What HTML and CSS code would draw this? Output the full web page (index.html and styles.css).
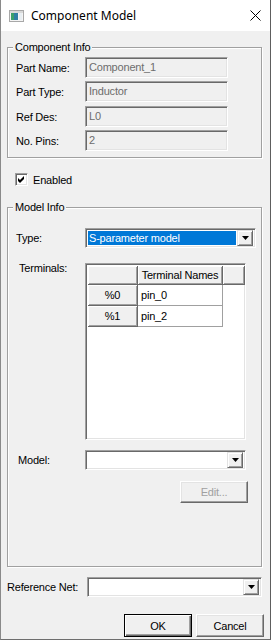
FILE: index.html
```html
<!DOCTYPE html>
<html>
<head>
<meta charset="utf-8">
<link rel="stylesheet" href="styles.css">
</head>
<body>
<div class="window">
  <div class="titlebar">
    <svg class="app-icon" width="15" height="12" viewBox="0 0 15 12">
      <rect x="0.5" y="0.5" width="14" height="11" fill="#f4f4f4" stroke="#a8a8a8"/>
      <rect x="1" y="1" width="13" height="2" fill="#d8d8d8"/>
      <rect x="2" y="3" width="7" height="7" fill="#2e7fa3"/>
      <rect x="2" y="3" width="3" height="7" fill="#3aa06a"/>
      <rect x="10" y="3" width="3" height="7" fill="#e8eef2"/>
    </svg>
    <span class="title">Component Model</span>
    <svg class="close" width="11" height="11" viewBox="0 0 11 11">
      <path d="M0.5 0.5 L10.5 10.5 M10.5 0.5 L0.5 10.5" stroke="#000" stroke-width="1"/>
    </svg>
  </div>
  <div class="body">
    <div class="group group-info">
      <span class="legend">Component Info</span>
      <div class="field-row r1"><span class="label">Part Name:</span><div class="textbox">Component_1</div></div>
      <div class="field-row r2"><span class="label">Part Type:</span><div class="textbox">Inductor</div></div>
      <div class="field-row r3"><span class="label">Ref Des:</span><div class="textbox">L0</div></div>
      <div class="field-row r4"><span class="label">No. Pins:</span><div class="textbox">2</div></div>
    </div>

    <div class="check-row">
      <span class="checkbox">
        <svg width="9" height="9" viewBox="0 0 9 9"><polygon points="1,3 3,5 7,1 7,4 3,8 1,6" fill="#000"/></svg>
      </span>
      <span class="check-label">Enabled</span>
    </div>

    <div class="group group-model">
      <span class="legend">Model Info</span>
      <div class="type-row">
        <span class="label type-label">Type:</span>
        <div class="combo combo-type">
          <div class="combo-field"><span class="selected">S-parameter model</span></div>
          <div class="drop-btn"><svg width="7" height="4" viewBox="0 0 7 4"><polygon points="0,0 7,0 3.5,4" fill="#000"/></svg></div>
        </div>
      </div>
      <div class="terminals-row">
        <span class="label term-label">Terminals:</span>
        <div class="grid">
          <div class="grid-row head-row">
            <div class="hcell c-idx"></div>
            <div class="hcell c-name">Terminal Names</div>
            <div class="hcell c-extra"></div>
          </div>
          <div class="grid-row">
            <div class="hcell c-idx rowhead">%0</div>
            <div class="dcell c-name">pin_0</div>
          </div>
          <div class="grid-row">
            <div class="hcell c-idx rowhead">%1</div>
            <div class="dcell c-name">pin_2</div>
          </div>
        </div>
      </div>
      <div class="model-row">
        <span class="label model-label">Model:</span>
        <div class="combo combo-model">
          <div class="combo-field"></div>
          <div class="drop-btn"><svg width="7" height="4" viewBox="0 0 7 4"><polygon points="0,0 7,0 3.5,4" fill="#000"/></svg></div>
        </div>
      </div>
      <div class="edit-row">
        <div class="button disabled">Edit...</div>
      </div>
    </div>

    <div class="refnet-row">
      <span class="label ref-label">Reference Net:</span>
      <div class="combo combo-ref">
        <div class="combo-field"></div>
        <div class="drop-btn"><svg width="7" height="4" viewBox="0 0 7 4"><polygon points="0,0 7,0 3.5,4" fill="#000"/></svg></div>
      </div>
    </div>

    <div class="buttons">
      <div class="button default">OK</div>
      <div class="button">Cancel</div>
    </div>
  </div>
</div>
</body>
</html>
```
FILE: styles.css
```css
* { box-sizing: border-box; }
html, body { margin: 0; padding: 0; }
body {
  width: 271px;
  height: 640px;
  overflow: hidden;
  font-family: "Liberation Sans", Arial, sans-serif;
  font-size: 11px;
  letter-spacing: -0.2px;
  color: #000;
  background: #f0f0f0;
}
.window {
  width: 271px;
  height: 640px;
  border-left: 1px solid #8a8a8a;
  border-right: 1px solid #5e5e5e;
  border-bottom: 1px solid #6e6e6e;
  background: #f0f0f0;
  display: flex;
  flex-direction: column;
}
.titlebar {
  height: 31px;
  flex: none;
  background: #fff;
  display: flex;
  align-items: center;
  padding-left: 8px;
  padding-right: 9px;
}
.app-icon { flex: none; margin-top: 1px; }
.title {
  font-family: "Noto Sans", "Open Sans", sans-serif;
  font-size: 12px;
  letter-spacing: 0;
  margin-left: 7px;
  flex: 1;
  margin-top: -1px;
}
.close { flex: none; margin-top: 0; }

.body {
  flex: 1;
  display: flex;
  flex-direction: column;
  padding-left: 6px;
}

.group {
  position: relative;
  width: 255px;
  border: 1px solid #a0a0a0;
  box-shadow: inset 1px 1px 0 #fff, 1px 1px 0 #fff;
}
.legend {
  position: absolute;
  top: -7px;
  left: 5px;
  padding: 0 2px;
  line-height: 13px;
  background: #f0f0f0;
}
.group-info {
  margin-top: 16px;
  height: 111px;
  padding: 9px 0 0 8px;
}
.field-row {
  display: flex;
  align-items: center;
  height: 21px;
}
.field-row.r2 { margin-top: 3px; }
.field-row.r3 { margin-top: 4px; }
.field-row.r4 { margin-top: 3px; }
.field-row .label { width: 69px; flex: none; }
.textbox {
  width: 143px;
  height: 21px;
  border-top: 1px solid #a0a0a0;
  border-left: 1px solid #a0a0a0;
  border-bottom: 1px solid #fff;
  border-right: 1px solid #fff;
  box-shadow: inset 1px 1px 0 #696969, inset -1px -1px 0 #e3e3e3;
  background: #f0f0f0;
  color: #6d6d6d;
  padding-left: 3px;
  line-height: 19px;
}

.check-row {
  margin-top: 15px;
  height: 13px;
  display: flex;
  align-items: center;
  padding-left: 8px;
}
.checkbox {
  width: 13px;
  height: 13px;
  flex: none;
  border-top: 1px solid #a0a0a0;
  border-left: 1px solid #a0a0a0;
  border-bottom: 1px solid #fff;
  border-right: 1px solid #fff;
  box-shadow: inset 1px 1px 0 #696969, inset -1px -1px 0 #e3e3e3;
  background: #fff;
  display: flex;
  align-items: center;
  justify-content: center;
}
.checkbox svg { display: block; }
.check-label { margin-left: 5px; }

.group-model {
  margin-top: 21px;
  height: 360px;
  padding: 20px 0 0 0;
  display: flex;
  flex-direction: column;
}
.type-row, .terminals-row, .model-row {
  display: flex;
}
.type-row, .model-row { align-items: center; }
.type-label { width: 77px; padding-left: 8px; flex: none; }
.term-label { width: 77px; padding-left: 11px; flex: none; }
.model-label { width: 77px; padding-left: 10px; flex: none; }

.combo {
  height: 20px;
  display: flex;
  border-top: 1px solid #a0a0a0;
  border-left: 1px solid #a0a0a0;
  border-bottom: 1px solid #fff;
  border-right: 1px solid #fff;
  box-shadow: inset 1px 1px 0 #696969, inset -1px -1px 0 #e3e3e3;
  background: #fff;
  padding: 2px;
}
.combo-field { flex: 1; display: flex; align-items: center; }
.selected {
  display: block;
  width: 100%;
  height: 14px;
  background: #0078d7;
  color: #fff;
  line-height: 14px;
  padding-left: 1px;
}
.combo-type .combo-field { padding-right: 1px; }
.drop-btn {
  width: 16px;
  flex: none;
  background: #f0f0f0;
  border-top: 1px solid #e3e3e3;
  border-left: 1px solid #e3e3e3;
  border-right: 1px solid #696969;
  border-bottom: 1px solid #696969;
  box-shadow: inset 1px 1px 0 #fff, inset -1px -1px 0 #a0a0a0;
  display: flex;
  align-items: center;
  justify-content: center;
  margin-top: -1px;
  margin-bottom: -1px;
}
.drop-btn svg { display: block; margin-left: 1px; }
.combo-type { width: 171px; }
.combo-model { width: 161px; }
.combo-ref { width: 175px; }

.terminals-row { margin-top: 15px; }
.term-label { line-height: 13px; margin-top: -1px; }
.grid {
  width: 161px;
  height: 177px;
  background: #fff;
  border-top: 1px solid #a0a0a0;
  border-left: 1px solid #a0a0a0;
  border-bottom: 1px solid #fff;
  border-right: 1px solid #fff;
  box-shadow: inset 1px 1px 0 #696969, inset -1px -1px 0 #e3e3e3;
  padding: 2px 0 0 2px;
}
.grid-row { display: flex; }
.head-row { height: 19px; }
.grid-row + .grid-row { height: 21px; }
.hcell {
  background: #f0f0f0;
  border-right: 1px solid #696969;
  border-bottom: 1px solid #696969;
  box-shadow: inset 1px 1px 0 #fff, inset -1px -1px 0 #a0a0a0;
  display: flex;
  align-items: center;
  justify-content: center;
  height: 100%;
}
.c-idx { width: 50px; }
.c-name { width: 85px; }
.c-extra { width: 22px; }
.dcell {
  background: #fff;
  border-right: 1px solid #a0a0a0;
  border-bottom: 1px solid #a0a0a0;
  padding-left: 3px;
  display: flex;
  align-items: center;
  height: 100%;
}

.model-row { margin-top: 10px; }
.edit-row {
  margin-top: 11px;
  display: flex;
  padding-left: 172px;
}
.button {
  width: 68px;
  height: 23px;
  background: #f0f0f0;
  border-top: 1px solid #fff;
  border-left: 1px solid #fff;
  border-right: 1px solid #696969;
  border-bottom: 1px solid #696969;
  box-shadow: inset -1px -1px 0 #a0a0a0, inset 1px 1px 0 #e3e3e3;
  display: flex;
  align-items: center;
  justify-content: center;
}
.edit-row .button { height: 22px; }
.button.disabled { color: #a0a0a0; }
.button.default {
  border: 1px solid #000;
  box-shadow: inset 1px 1px 0 #fff, inset -1px -1px 0 #696969, inset -2px -2px 0 #a0a0a0;
}

.refnet-row {
  margin-top: 10px;
  display: flex;
  align-items: center;
}
.ref-label { width: 80px; flex: none; }

.buttons {
  margin-top: 17px;
  display: flex;
  justify-content: flex-end;
  gap: 4px;
  padding-right: 6px;
}
```
